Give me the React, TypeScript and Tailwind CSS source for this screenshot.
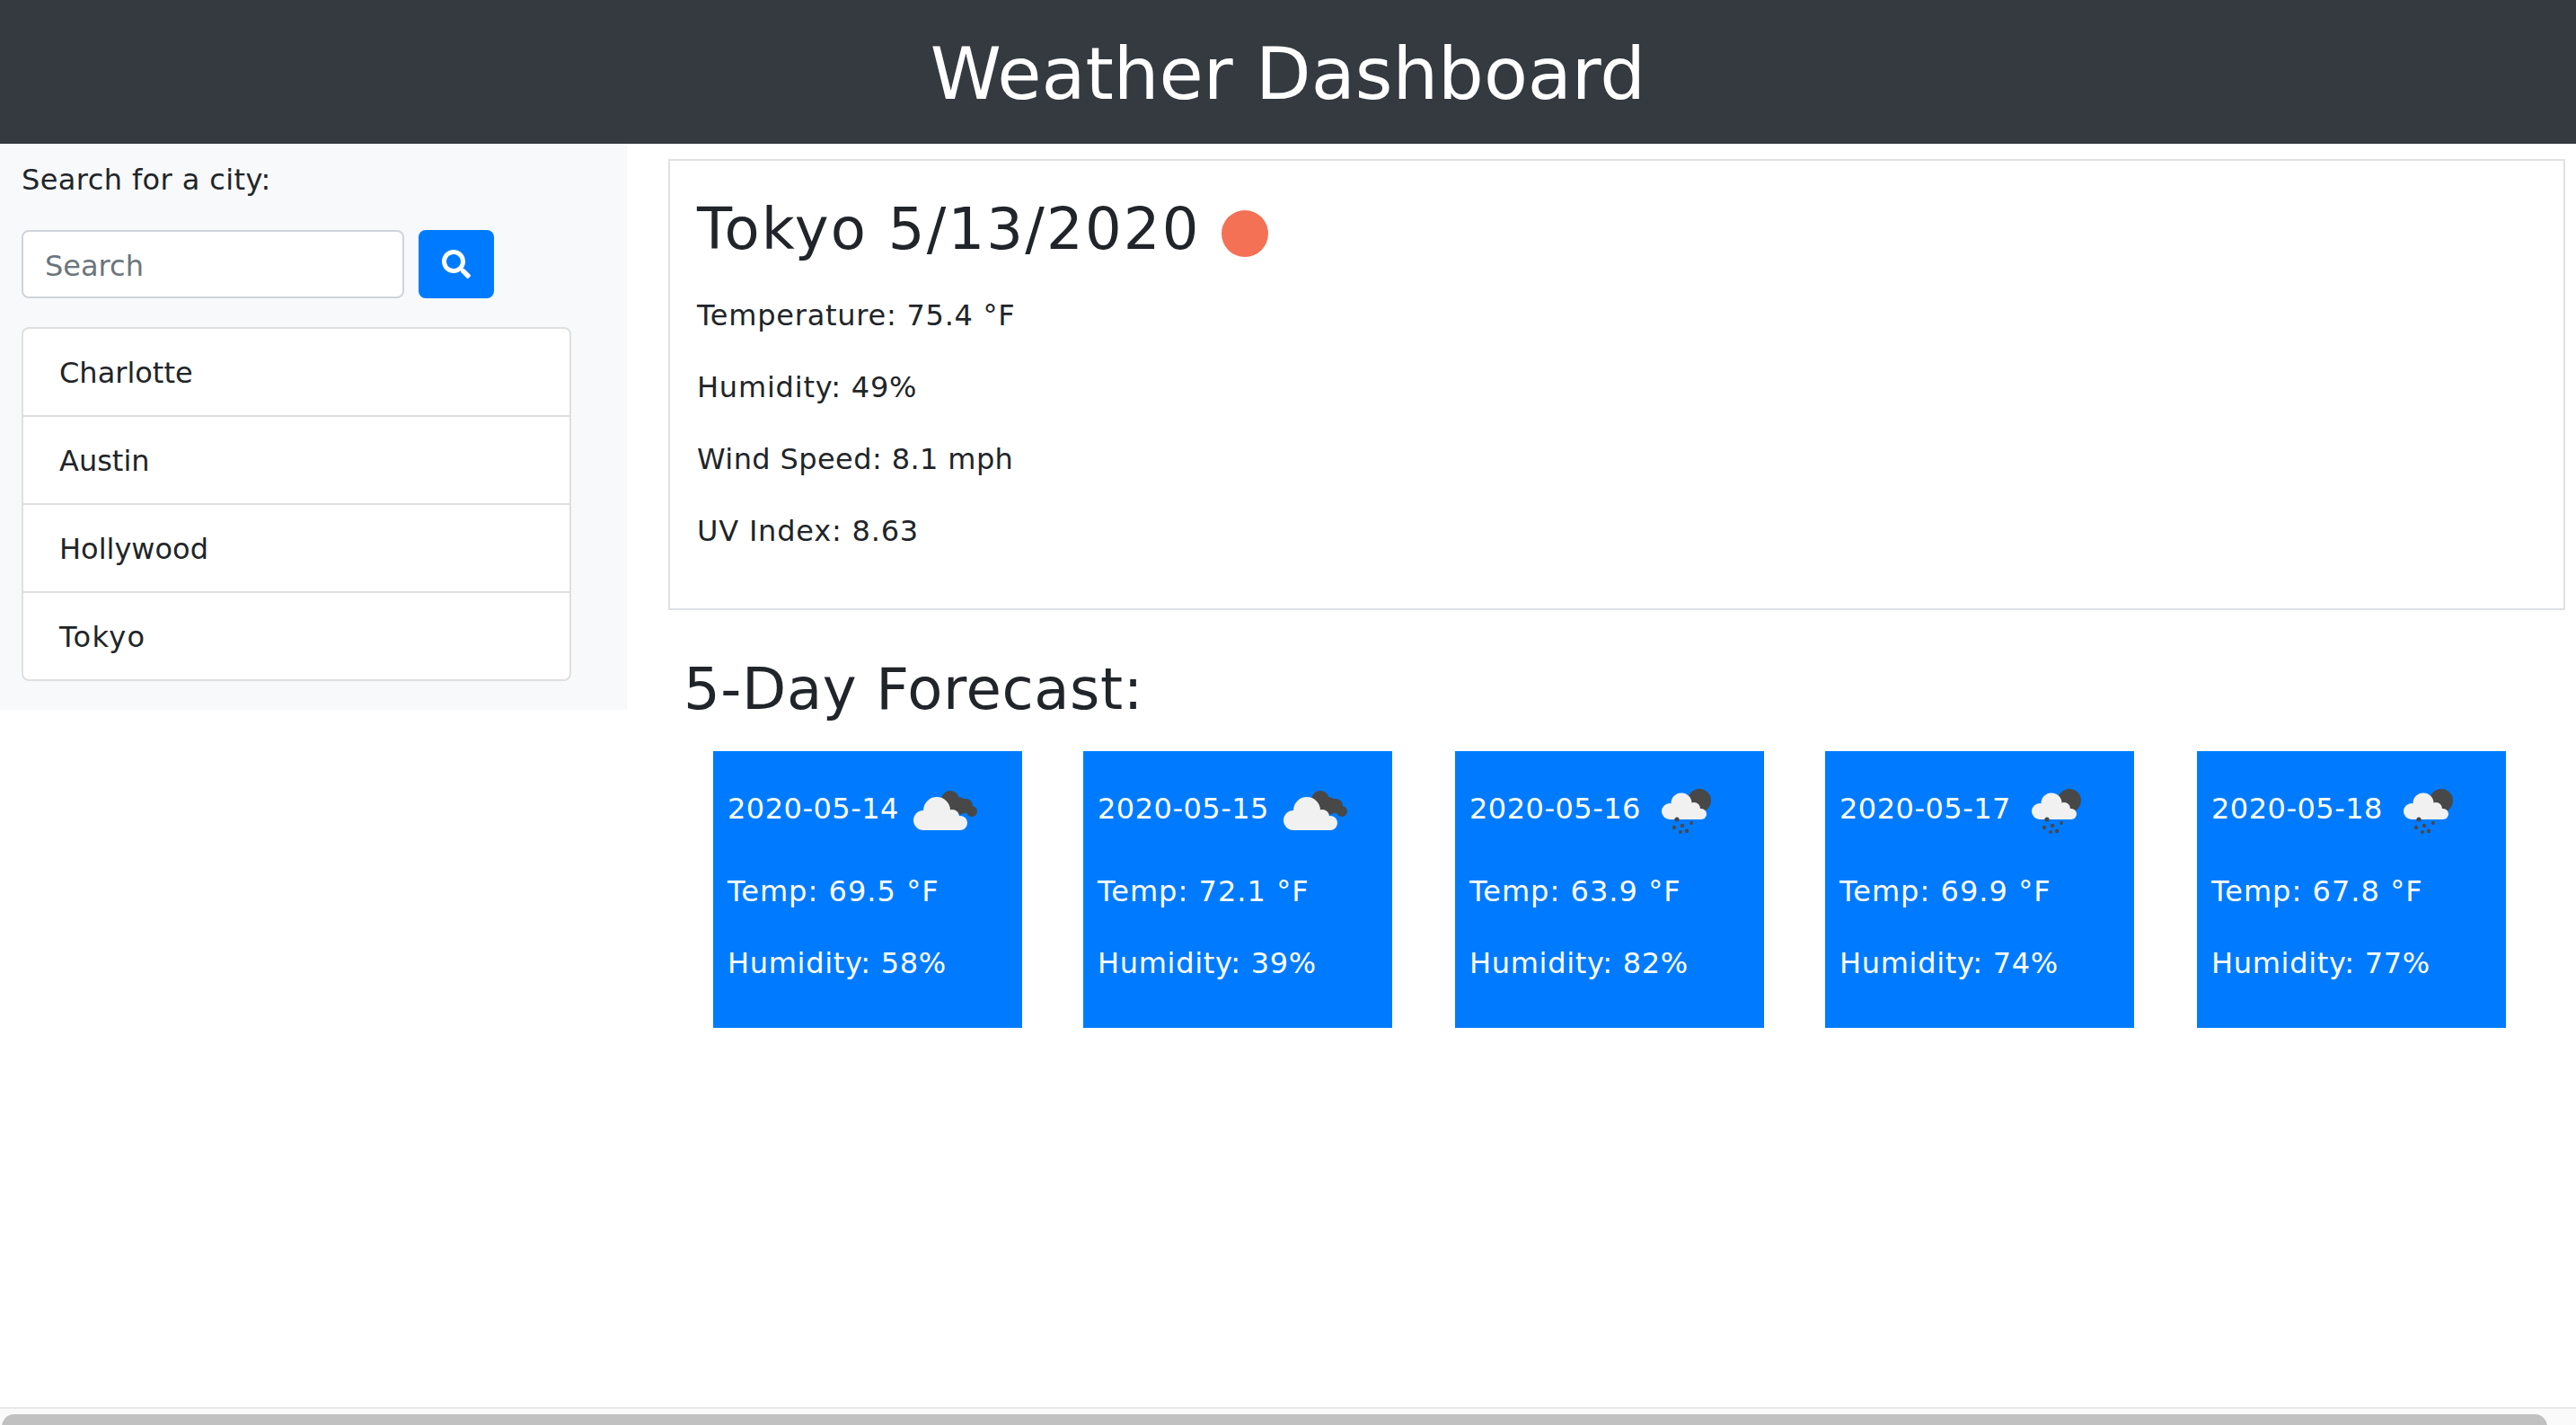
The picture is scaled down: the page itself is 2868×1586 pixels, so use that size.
import { FaSearch } from "react-icons/fa";

const cities = [
  { name: "Charlotte", spacing: "tracking-[0px]" },
  { name: "Austin", spacing: "tracking-[0px]" },
  { name: "Hollywood", spacing: "tracking-[0px]" },
  { name: "Tokyo", spacing: "tracking-[1.4px]" },
];

const forecast = [
  { date: "2020-05-14", temp: "69.5", humidity: "58", rain: false },
  { date: "2020-05-15", temp: "72.1", humidity: "39", rain: false },
  { date: "2020-05-16", temp: "63.9", humidity: "82", rain: true },
  { date: "2020-05-17", temp: "69.9", humidity: "74", rain: true },
  { date: "2020-05-18", temp: "67.8", humidity: "77", rain: true },
];

function CloudIcon() {
  return (
    <svg width="100" height="100" viewBox="0 0 100 100" className="shrink-0">
      <g fill="#484848">
        <circle cx="55" cy="40" r="10" />
        <circle cx="64" cy="47" r="10" />
        <circle cx="72" cy="47" r="8" />
        <circle cx="79" cy="53" r="6" />
      </g>
      <g fill="#f1f1f1">
        <circle cx="40" cy="52" r="15" />
        <circle cx="25" cy="63" r="11" />
        <circle cx="57" cy="59" r="8" />
        <circle cx="66" cy="66" r="8" />
        <rect x="25" y="60" width="41" height="14" />
      </g>
    </svg>
  );
}

function RainIcon() {
  return (
    <svg width="100" height="100" viewBox="0 0 100 100" className="shrink-0">
      <circle cx="63" cy="41" r="13" fill="#484848" />
      <g fill="#f1f1f1">
        <circle cx="43" cy="44" r="11.5" />
        <circle cx="30" cy="53" r="9" />
        <circle cx="57" cy="50" r="7" />
        <circle cx="65" cy="56" r="6" />
        <rect x="30" y="50" width="35" height="12" />
      </g>
      <g fill="#484848">
        <circle cx="38" cy="62" r="2.6" />
        <circle cx="35" cy="71" r="2.2" />
        <circle cx="44" cy="69" r="2.2" />
        <circle cx="54" cy="66" r="2" />
        <circle cx="42" cy="76" r="2" />
        <circle cx="49" cy="75" r="2.2" />
      </g>
    </svg>
  );
}

export default function App() {
  return (
    <div className="flex h-[1586px] flex-col overflow-hidden bg-white font-['DejaVu_Sans',sans-serif] text-[32px] leading-[48px] text-[#212529]">
      <header className="flex h-[160px] shrink-0 items-center justify-center bg-[#343a40] pt-[5px] text-[80px] leading-[96px] text-white">
        Weather Dashboard
      </header>

      <div className="flex flex-1">
        <aside className="h-[630px] w-[698px] shrink-0 bg-[#f8f9fa] px-[24px] pt-[16px]">
          <label className="block tracking-[0.4px]">Search for a city:</label>
          <div className="mt-[32px] flex gap-[16px]">
            <input
              placeholder="Search"
              className="h-[76px] w-[426px] rounded-[8px] border-2 border-[#ced4da] bg-white px-[24px] pt-[4px] text-[#495057] placeholder:text-[#6c757d]"
            />
            <button className="flex h-[76px] w-[84px] items-center justify-center rounded-[8px] bg-[#007bff] text-white">
              <FaSearch className="h-[32px] w-[32px]" />
            </button>
          </div>
          <ul className="mt-[32px] w-[612px] overflow-hidden rounded-[8px] border-2 border-[#dfdfdf] bg-white">
            {cities.map((city, i) => (
              <li
                key={city.name}
                className={`flex items-center px-[40px] pt-[1px] ${city.spacing} ${i > 0 ? "h-[98px] border-t-2 border-[#dfdfdf]" : "h-[96px]"}`}
              >
                {city.name}
              </li>
            ))}
          </ul>
        </aside>

        <main className="flex-1 pl-[46px] pr-[12px] pt-[17px]">
          <section className="h-[502px] border-2 border-[#dee2e6] px-[30px] pt-[38px]">
            <h2 className="flex items-center text-[64px] leading-[77px] tracking-[2.2px]">
              Tokyo 5/13/2020
              <span className="ml-[23px] mt-[8px] h-[52px] w-[52px] rounded-full bg-[#f47155]" />
            </h2>
            <div className="mt-[33px] flex flex-col gap-[32px]">
              <p className="tracking-[0.75px]">Temperature: 75.4 °F</p>
              <p className="tracking-[0.8px]">Humidity: 49%</p>
              <p className="tracking-[0.4px]">Wind Speed: 8.1 mph</p>
              <p className="tracking-[0.8px]">UV Index: 8.63</p>
            </div>
          </section>

          <h2 className="ml-[17px] mt-[50px] text-[64px] leading-[77px] tracking-[0.6px]">5-Day Forecast:</h2>

          <div className="ml-[50px] mt-[30px] flex gap-[68px]">
            {forecast.map((day) => (
              <div
                key={day.date}
                className="h-[308px] w-[344px] bg-[#007bff] px-[16px] pt-[14px] text-white odd:not-first:ml-[2px]"
              >
                <div className="flex h-[100px] items-center">
                  <span className="w-[193px] shrink-0 tracking-[0.5px]">{day.date}</span>
                  {day.rain ? <RainIcon /> : <CloudIcon />}
                </div>
                <p className="mt-[18px] tracking-[1.05px]">Temp: {day.temp} °F</p>
                <p className="mt-[32px] tracking-[0.7px]">Humidity: {day.humidity}%</p>
              </div>
            ))}
          </div>
        </main>
      </div>

      {/* horizontal scrollbar, thumb cut off by the window edge */}
      <div className="h-[20px] shrink-0 overflow-hidden border-t-2 border-[#e8e8e8] bg-[#fafafa] pl-[2px] pr-[32px] pt-[6px]">
        <div className="h-[28px] rounded-[14px] bg-[#c1c1c1]" />
      </div>
    </div>
  );
}
